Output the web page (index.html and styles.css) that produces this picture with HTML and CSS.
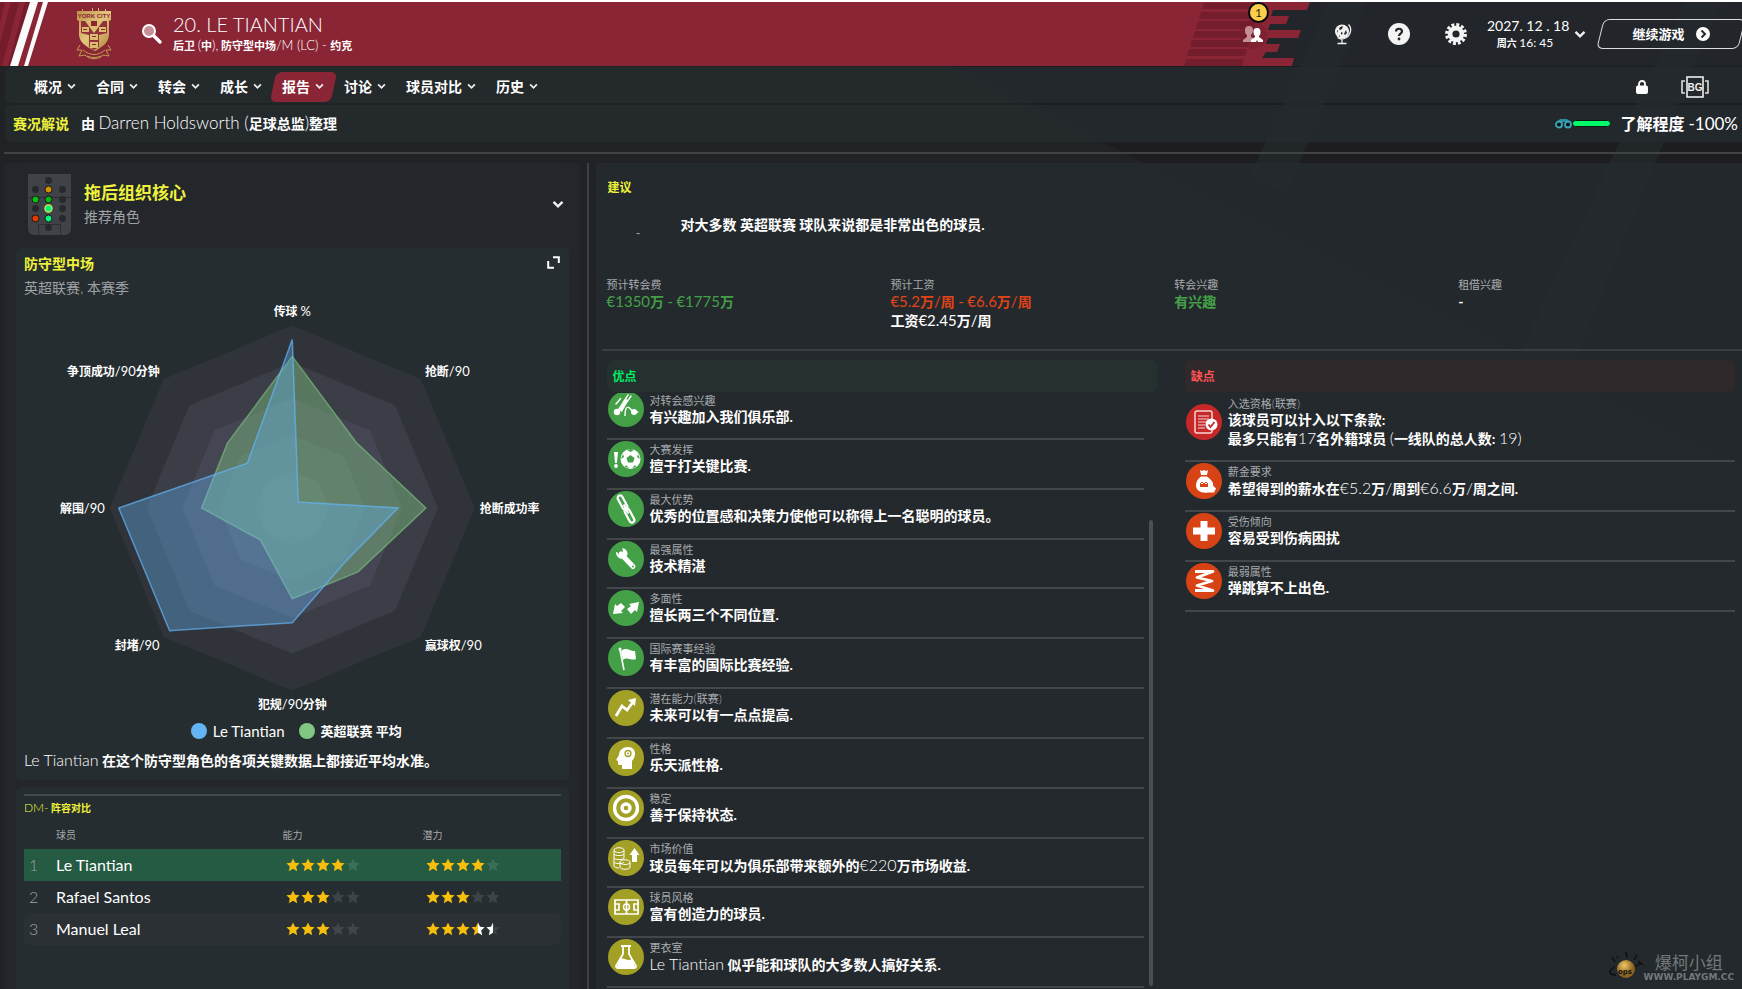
FILE: index.html
```html
<!DOCTYPE html>
<html lang="zh-CN">
<head>
<meta charset="utf-8">
<title>20. LE TIANTIAN</title>
<link rel="stylesheet" href="styles.css">
</head>
<body>
<svg class="backdrop" viewBox="0 0 1742 989" preserveAspectRatio="xMaxYMin slice" aria-hidden="true">
  <path class="shade" d="M950 62 1742 466V0H950Z"/>
  <path class="ray" d="M1329 0h38l-80 190-36-18ZM1685 0h36l-140 342-16 36-46-24Z"/>
</svg>

<svg width="0" height="0" class="defs" aria-hidden="true">
  <defs>
    <linearGradient id="gold-white"><stop offset=".5" stop-color="#f7be0e"/><stop offset=".5" stop-color="#fff"/></linearGradient>
    <linearGradient id="white-grey"><stop offset=".5" stop-color="#fff"/><stop offset=".5" stop-color="#3d4245"/></linearGradient>
    <linearGradient id="crest-gold" x1="0" y1="0" x2="1" y2="1"><stop offset="0" stop-color="#b98f45"/><stop offset=".5" stop-color="#e3c67c"/><stop offset="1" stop-color="#b08338"/></linearGradient>
    <radialGradient id="ball" cx=".4" cy=".3"><stop offset="0" stop-color="#f0c868"/><stop offset="1" stop-color="#8a6420"/></radialGradient>
    <path id="star" d="M7 0.400 9 4.800 13.600 5.300 10.200 8.500 11.200 13.200 7 10.800 2.800 13.200 3.800 8.500 0.400 5.300 5 4.800Z"/>
    <symbol id="chev" viewBox="0 0 8 6"><path d="M1 1.200 4 4.200 7 1.200" fill="none" stroke="#eee" stroke-width="1.600"/></symbol>
  </defs>
</svg>

<header class="top">
  <svg class="stripes-left" width="50" height="64" viewBox="0 0 50 64" aria-hidden="true">
    <path fill="#741c2c" d="M0 0h5L0 22ZM11 0h8L2 64H0V40ZM25 0h5L13 64H8Z"/>
    <path fill="#fafafa" d="M30 0h8L18 64h-8ZM43 0h5L28 64h-4Z"/>
  </svg>
  <svg class="crest" width="36" height="54" viewBox="0 0 36 54" role="img" aria-label="York City">
    <path fill="url(#crest-gold)" d="M1 4h5V2h1v2h9V1h1v3h5V1h1v3h6V2h1v2h5v9l-2 1v13c0 8-5 12-14 17C8 39 3 34 3 27V14l-2-1Z"/>
    <path fill="#8a2534" d="M5 14h4l9 12 9-12h4v12l-8 2v12l-5 3-5-3V28l-8-2Z" opacity=".9"/>
    <path fill="#dcbc70" d="M10 14h5v4h6v-4h5l-8 10ZM6 20h7v5H6ZM23 20h7v5h-7ZM14 27h8v6h-8ZM14 35h8v6h-8Z"/>
    <path fill="#8a2534" d="M15 14h6v5h-6ZM7 22h4v1H7ZM25 22h4v1h-4ZM16 29h4v1h-4ZM16 37h4v1h-4Z"/>
    <path fill="none" stroke="#c09a50" d="M4 38 1 43h5l-3 6 6-1c5 5 13 5 18 0l6 1-3-6h5l-3-5M7 43c7 6 15 6 22 0M11 49c5 2 9 2 14 0"/>
    <text x="18" y="11" class="crest-text">YORK CITY</text>
  </svg>
  <svg class="search" width="22" height="22" viewBox="0 0 22 22" aria-hidden="true">
    <circle cx="8" cy="8" r="6" fill="#c98f98" stroke="#fff" stroke-width="2"/>
    <path d="M13 13 19 19" stroke="#fff" stroke-width="3.400" stroke-linecap="round"/>
  </svg>
  <div class="title">
    <h1>20. LE TIANTIAN</h1>
    <p>后卫 <span class="l">(</span>中<span class="l">),</span> 防守型中场<span class="l">/M (LC) - </span>约克</p>
  </div>
  <svg class="stripes-right" width="134" height="64" viewBox="0 0 134 64" aria-hidden="true">
    <path fill="#8a2535" d="M0 0h134l-3 8H97l-2 6h18l-3 8H94l-2 6h33l-3 8H92l-2 6h14l-3 8H90l-4 6h32l-2 8H0Z"/>
    <path fill="#741e2d" d="M28 1h58l-2 6H26ZM25 10h58l-2 7H23ZM22 19h58l-2 8H20ZM19 29h58l-2 7H17ZM16 38h58l-2 7H14ZM13 47h58l-2 7H11ZM10 57h58l-2 7H8Z"/>
  </svg>
  <div class="tools">
    <button class="icon social" aria-label="社交">
      <svg width="28" height="28" viewBox="0 0 28 28"><circle cx="14" cy="14" r="14" fill="#741e2d" opacity=".5"/>
      <path fill="#c48e97" d="M10 5c3 0 4 2 4 4s-1 4-2 5v2l4 2v3H4v-2l4-3v-2C6 13 6 11 6 9s1-4 4-4Z"/>
      <path fill="#fff" d="M18 7c3 0 3.500 2 3.500 4s-.5 3-1.500 4v1l4 3v2h-5l-1-2-1 2h-5v-2l4-3v-1c-1-1-1.500-2-1.500-4s.5-4 3.500-4Z"/></svg>
      <span class="badge">1</span>
    </button>
    <button class="icon" aria-label="世界">
      <svg width="20" height="22" viewBox="0 0 20 22"><circle cx="9" cy="8.500" r="7" fill="#f2f2f2"/><path fill="#24272c" d="m7 4 3-1-1 3-2 1-1-1ZM13 7l1 3-2 2-1-1ZM8 9l2 1-2 2ZM4 7l1 1-1 2ZM6 12l1 1-1 1Z"/><path d="M15.500 1.500c4 4 2 11-3 13.500-3 1.500-6 1-8-.5M9 16v4M4.500 20.500h9" fill="none" stroke="#f2f2f2" stroke-width="1.300"/></svg>
    </button>
    <button class="icon" aria-label="帮助">
      <svg width="22" height="22" viewBox="0 0 22 22"><circle cx="11" cy="11" r="11" fill="#f4f4f4"/><path d="M8 8.500C8 4.800 14 4.800 14 8.500c0 2-3 2.200-3 4.500" fill="none" stroke="#24272c" stroke-width="2.200"/><circle cx="11" cy="16" r="1.400" fill="#24272c"/></svg>
    </button>
    <button class="icon" aria-label="设置">
      <svg width="24" height="24" viewBox="0 0 24 24"><circle cx="12" cy="12" r="9.200" fill="none" stroke="#f4f4f4" stroke-width="3.500" stroke-dasharray="2.900 1.917"/><circle cx="12" cy="12" r="5.900" fill="none" stroke="#f4f4f4" stroke-width="4.600"/></svg>
    </button>
    <div class="date"><b>2027. 12 . 18</b><small>周六 <span class="l">16: 45</span></small></div>
    <button class="icon down" aria-label="日期菜单"><svg width="12" height="9"><use href="#chev"/></svg></button>
    <button class="continue">继续游戏
      <svg width="14" height="14" viewBox="0 0 14 14" aria-hidden="true"><circle cx="7" cy="7" r="7" fill="#fff"/><path d="M5.500 3.500 9 7 5.500 10.500" fill="none" stroke="#24272c" stroke-width="2"/></svg>
    </button>
  </div>
</header>

<nav class="menu">
  <button>概况<svg><use href="#chev"/></svg></button>
  <button>合同<svg><use href="#chev"/></svg></button>
  <button>转会<svg><use href="#chev"/></svg></button>
  <button>成长<svg><use href="#chev"/></svg></button>
  <button class="on">报告<svg><use href="#chev"/></svg></button>
  <button>讨论<svg><use href="#chev"/></svg></button>
  <button>球员对比<svg><use href="#chev"/></svg></button>
  <button>历史<svg><use href="#chev"/></svg></button>
  <div class="menu-end">
    <svg width="12" height="14" viewBox="0 0 12 14" role="img" aria-label="锁定"><rect y="5.500" width="12" height="8.500" rx="2" fill="#fff"/><path d="M3 7V4a3 3 0 0 1 6 0v3" fill="none" stroke="#fff" stroke-width="1.800"/></svg>
    <svg width="30" height="24" viewBox="0 0 30 24" role="img" aria-label="BG"><path d="M5 6H2v12h3M25 6h3v12h-3" fill="none" stroke="#ddd" stroke-width="1.600"/><rect x="7" y="2" width="16" height="20" fill="none" stroke="#eee" stroke-width="1.600"/><text x="15" y="16" class="bg-text">BG</text></svg>
  </div>
</nav>

<section class="byline">
  <h2>赛况解说</h2>
  <p>由 <span class="l">Darren Holdsworth (</span>足球总监<span class="l">)</span>整理</p>
  <div class="knowledge">
    <svg width="17" height="11" viewBox="0 0 17 11" aria-hidden="true"><path d="M2 4 5 1h7l3 3Z" fill="#2b8c9c"/><circle cx="4" cy="6.500" r="3" fill="#111" stroke="#37a8ba" stroke-width="1.800"/><circle cx="13" cy="6.500" r="3" fill="#111" stroke="#37a8ba" stroke-width="1.800"/></svg>
    <i class="meter"></i>
    <p>了解程度 <span class="l">-100%</span></p>
  </div>
</section>

<main>
  <aside class="left">
    <section class="card role">
      <svg width="43" height="61" viewBox="0 0 43 61" role="img" aria-label="位置">
        <path fill="#3f4246" d="M0 0h43v55a6 6 0 0 1-6 6H6a6 6 0 0 1-6-6Z"/>
        <path d="M0 23.500h43M10.500 61V50.500h22V61" fill="none" stroke="#2b2e32"/>
        <g fill="#26282c"><circle cx="20.500" cy="6.500" r="3.400"/><circle cx="7.500" cy="15.500" r="3.400"/><circle cx="34.500" cy="15.500" r="3.400"/><circle cx="34.500" cy="25.500" r="3.400"/><circle cx="7.500" cy="34.500" r="3.400"/><circle cx="34.500" cy="34.500" r="3.400"/><circle cx="34.500" cy="44.500" r="3.400"/><circle cx="20.500" cy="53.500" r="3.400"/></g>
        <g stroke="#17191b"><circle cx="20.500" cy="15.500" r="3.500" fill="#d59100"/><circle cx="7.500" cy="25.500" r="3.500" fill="#05c014"/><circle cx="20.500" cy="25.500" r="3.500" fill="#05b414"/><circle cx="7.500" cy="44.500" r="3.500" fill="#e03a00"/><circle cx="20.500" cy="44.500" r="3.500" fill="#00f779"/></g>
        <circle cx="20.500" cy="34.500" r="3.600" fill="#00f779" stroke="#e6e85a" stroke-width="1.200"/>
      </svg>
      <div><h3>拖后组织核心</h3><p>推荐角色</p></div>
      <button class="icon" aria-label="展开角色"><svg width="12" height="9"><use href="#chev"/></svg></button>
    </section>

    <section class="card radar">
      <div class="radar-head">
        <div><h3>防守型中场</h3><p>英超联赛<span class="l">,</span> 本赛季</p></div>
        <button class="icon" aria-label="放大"><svg width="13" height="13" viewBox="0 0 13 13"><path d="M6 1.200h5.800V7M1.200 5v6.800H7" fill="none" stroke="#fff" stroke-width="2"/></svg></button>
      </div>
      <svg class="chart" viewBox="16 299 554 417" role="img" aria-label="雷达图">
        <path fill="#30343a" d="M293 325 422 379 476 508 422 637 293 691 164 637 110 508 164 379Z"/>
        <path fill="#3b3e46" d="M293 362 396 405 439 508 396 611 293 654 190 611 147 508 190 405Z"/>
        <path fill="#454653" d="M293 398 371 430 403 508 371 586 293 618 215 586 183 508 215 430Z"/>
        <path fill="#4d505b" d="M293 435 345 456 366 508 345 560 293 581 241 560 220 508 241 456Z"/>
        <path fill="#545862" d="M293 471 319 482 330 508 319 534 293 545 267 534 256 508 267 482Z"/>
        <path fill="#81c784" fill-opacity=".42" stroke="#81c784" stroke-opacity=".6" stroke-width="1.500" d="M293 356 357 442 427 508 359 572 293 599 261 540 202 508 228 443Z"/>
        <path fill="#64b5f6" fill-opacity=".36" stroke="#64b5f6" stroke-opacity=".7" stroke-width="1.500" d="M293 339 299 502 399 508 347 561 293 623 170 631 119 508 248 463Z"/>
        <g class="axis">
          <g class="mid"><text x="293" y="315">传球 <tspan class="l">%</tspan></text><text x="293" y="710">犯规<tspan class="l">/90</tspan>分钟</text></g>
          <text x="426" y="376">抢断<tspan class="l">/90</tspan></text><text x="481" y="513">抢断成功率</text><text x="426" y="650">赢球权<tspan class="l">/90</tspan></text>
          <g class="end"><text x="160" y="650">封堵<tspan class="l">/90</tspan></text><text x="105" y="513">解围<tspan class="l">/90</tspan></text><text x="160" y="376">争顶成功<tspan class="l">/90</tspan>分钟</text></g>
        </g>
      </svg>
      <div class="legend"><span class="key blue"></span><span class="l">Le Tiantian</span><span class="key green"></span><span>英超联赛 平均</span></div>
      <p class="summary"><span class="l">Le Tiantian</span> 在这个防守型角色的各项关键数据上都接近平均水准。</p>
    </section>

    <section class="card squad">
      <h4><span class="l">DM-</span> 阵容对比</h4>
      <table>
        <thead><tr><th class="n"></th><th>球员</th><th class="s">能力</th><th class="s">潜力</th></tr></thead>
        <tbody>
          <tr class="sel"><td class="n">1</td><td>Le Tiantian</td>
            <td><svg class="stars"><g class="g"><use href="#star" x="0"/><use href="#star" x="15"/><use href="#star" x="30"/><use href="#star" x="45"/></g><use class="e" href="#star" x="60"/></svg></td>
            <td><svg class="stars"><g class="g"><use href="#star" x="0"/><use href="#star" x="15"/><use href="#star" x="30"/><use href="#star" x="45"/></g><use class="e" href="#star" x="60"/></svg></td></tr>
          <tr><td class="n">2</td><td>Rafael Santos</td>
            <td><svg class="stars"><g class="g"><use href="#star" x="0"/><use href="#star" x="15"/><use href="#star" x="30"/></g><g class="e"><use href="#star" x="45"/><use href="#star" x="60"/></g></svg></td>
            <td><svg class="stars"><g class="g"><use href="#star" x="0"/><use href="#star" x="15"/><use href="#star" x="30"/></g><g class="e"><use href="#star" x="45"/><use href="#star" x="60"/></g></svg></td></tr>
          <tr class="alt"><td class="n">3</td><td>Manuel Leal</td>
            <td><svg class="stars"><g class="g"><use href="#star" x="0"/><use href="#star" x="15"/><use href="#star" x="30"/></g><g class="e"><use href="#star" x="45"/><use href="#star" x="60"/></g></svg></td>
            <td><svg class="stars"><g class="g"><use href="#star" x="0"/><use href="#star" x="15"/><use href="#star" x="30"/></g><use href="#star" x="45" fill="url(#gold-white)"/><use href="#star" x="60" fill="url(#white-grey)"/></svg></td></tr>
        </tbody>
      </table>
    </section>
  </aside>

  <section class="right">
    <div class="advice">
      <h3>建议</h3>
      <div class="verdict"><span class="grade">-</span><p>对大多数 英超联赛 球队来说都是非常出色的球员.</p></div>
    </div>
    <dl class="facts">
      <div><dt>预计转会费</dt><dd class="good"><span class="l">€1350</span>万 <span class="l">-</span> <span class="l">€1775</span>万</dd></div>
      <div><dt>预计工资</dt><dd class="bad"><span class="l">€5.2</span>万<span class="l">/</span>周 <span class="l">-</span> <span class="l">€6.6</span>万<span class="l">/</span>周</dd><dd>工资<span class="l">€2.45</span>万<span class="l">/</span>周</dd></div>
      <div><dt>转会兴趣</dt><dd class="good">有兴趣</dd></div>
      <div><dt>租借兴趣</dt><dd>-</dd></div>
    </dl>
    <div class="columns">
      <section class="col pros">
        <h3>优点</h3>
        <div class="scroller">
          <ul class="list">
            <li><svg class="ic green" viewBox="0 0 36 36"><path d="M11 18 20 4M15 17l8-12M8 13l5-6" fill="none" stroke="#fff" stroke-width="1.500" stroke-linecap="round" stroke-dasharray="3 1"/><circle cx="9" cy="21" r="3.200" fill="#fff"/><path d="m11 19 7-11 2 1-6 12Z" fill="#fff"/><path d="M17 25c0-10 3-11 7-5" fill="none" stroke="#fff" stroke-width="1.400"/><circle cx="26" cy="21" r="3" fill="#fff"/><path d="m27 19 4 2-4 2Z" fill="#fff"/></svg><div><h4>对转会感兴趣</h4><p>有兴趣加入我们俱乐部.</p></div></li>
            <li><svg class="ic green" viewBox="0 0 36 36"><path d="M6 11h4l-1 11H7Z" fill="#fff"/><circle cx="8" cy="25" r="1.900" fill="#fff"/><circle cx="22.500" cy="18" r="10" fill="#fff"/><path d="m22.500 14 4 3-1.500 4.500h-5L18.500 17ZM19 9l3.500 2L26 9l-3.500-1ZM13 18l2-5 1 3ZM32 18l-2-5-1 3ZM17 26l1-2 3 3ZM28 26l-1-2-3 3Z" fill="#43a047"/></svg><div><h4>大赛发挥</h4><p>擅于打关键比赛.</p></div></li>
            <li><svg class="ic green" viewBox="0 0 36 36"><g fill="none" stroke="#fff" stroke-width="2.200" transform="rotate(-28 18 18)"><rect x="15.500" y="3" width="5" height="15" rx="2.500"/><rect x="15.500" y="18" width="5" height="15" rx="2.500"/><path d="M18 13v10"/></g></svg><div><h4>最大优势</h4><p>优秀的位置感和决策力使他可以称得上一名聪明的球员。</p></div></li>
            <li><svg class="ic green" viewBox="0 0 36 36"><path d="M13 13 25 25.500" stroke="#fff" stroke-width="5" stroke-linecap="round"/><path d="M8 11c0 5 4 8 8 6 4-1 5-6 1-9l-3-1 1 3-1 3-3 1-2-3Z" fill="#fff"/><circle cx="25" cy="25.500" r="1" fill="#43a047"/></svg><div><h4>最强属性</h4><p>技术精湛</p></div></li>
            <li><svg class="ic green" viewBox="0 0 36 36"><path d="M5 24 7 14l2 2 4-3 4 4-4 4 2 2ZM31 12l-2 10-2-2-4 4-4-5 4-3-2-2Z" fill="#fff"/></svg><div><h4>多面性</h4><p>擅长两三个不同位置.</p></div></li>
            <li><svg class="ic green" viewBox="0 0 36 36"><path d="m12 10 4 20" stroke="#fff" stroke-width="1.600"/><circle cx="12" cy="9" r="1.500" fill="#fff"/><path d="M13 11c5-5 10 1 14 0l1 8c-5 2-9-3-13 1Z" fill="#fff"/></svg><div><h4>国际赛事经验</h4><p>有丰富的国际比赛经验.</p></div></li>
            <li><svg class="ic olive" viewBox="0 0 36 36"><path d="m8 26 6-10 5 4 6-8" fill="none" stroke="#fff" stroke-width="2.800"/><path d="m20 10 8-2-1 8Z" fill="#fff"/></svg><div><h4>潜在能力<span class="l">(</span>联赛<span class="l">)</span></h4><p>未来可以有一点点提高.</p></div></li>
            <li><svg class="ic olive" viewBox="0 0 36 36"><path d="M14 29v-4h-3c-1 0-1-2-1-4l-2-1 3-5c0-5 4-8 9-8 8 0 9 9 4 14v8Z" fill="#fff"/><circle cx="20" cy="13.500" r="3" fill="none" stroke="#a3a026" stroke-width="1.300"/><circle cx="20" cy="13.500" r="1" fill="#a3a026"/></svg><div><h4>性格</h4><p>乐天派性格.</p></div></li>
            <li><svg class="ic olive" viewBox="0 0 36 36"><circle cx="18" cy="18" r="11.500" fill="none" stroke="#fff" stroke-width="3.400"/><circle cx="18" cy="18" r="4" fill="none" stroke="#fff" stroke-width="3.400"/></svg><div><h4>稳定</h4><p>善于保持状态.</p></div></li>
            <li><svg class="ic olive" viewBox="0 0 36 36"><path d="M6 10c0-3 10-3 10 0v4c0 2-10 2-10 0ZM6 14v4c0 2 10 2 10 0v-4M6 18v4c0 2 10 2 10 0M6 22v4c0 1 3 2 5 2M12 22c0-3 10-3 10 0v5c0 3-10 3-10 0ZM12 23c2 2 8 2 10 0M6 11c2 2 8 2 10 0" fill="none" stroke="#fff"/><path d="m26.500 8 5 7h-2.500v7h-5v-7h-2.500Z" fill="#fff"/></svg><div><h4>市场价值</h4><p>球员每年可以为俱乐部带来额外的<span class="l">€220</span>万市场收益.</p></div></li>
            <li><svg class="ic olive" viewBox="0 0 36 36"><path d="M7 11h23v14H7ZM18.500 11v14M7 15h4v6H7M30 15h-4v6h4" fill="none" stroke="#fff" stroke-width="1.700"/><circle cx="18.500" cy="18" r="3" fill="none" stroke="#fff" stroke-width="1.500"/></svg><div><h4>球员风格</h4><p>富有创造力的球员.</p></div></li>
            <li><svg class="ic olive" viewBox="0 0 36 36"><path d="M13 7h10M15 7v8L8 27c0 1 0 2 2 2h16c2 0 2-1 2-2l-7-12V7" fill="none" stroke="#fff" stroke-width="1.800"/><path d="M12 20c5-2 7 3 12 0l3 8H9Z" fill="#fff"/></svg><div><h4>更衣室</h4><p><span class="l">Le Tiantian</span> 似乎能和球队的大多数人搞好关系.</p></div></li>
          </ul>
          <div class="track"><i class="thumb"></i></div>
        </div>
      </section>
      <section class="col cons">
        <h3>缺点</h3>
        <ul class="list">
          <li class="tall"><svg class="ic red" viewBox="0 0 36 36"><rect x="9" y="7" width="17" height="22" rx="2" fill="none" stroke="#f6d4d4" stroke-width="1.500"/><path d="M12 12h11M12 15h11M12 18h9M12 21h7M12 24h7" stroke="#f6d4d4"/><circle cx="25.500" cy="20.500" r="6" fill="#fff"/><path d="m22.500 20.500 2 2.500 4-5" fill="none" stroke="#c62828" stroke-width="1.800"/></svg><div><h4>入选资格<span class="l">(</span>联赛<span class="l">)</span></h4><p>该球员可以计入以下条款:</p><p>最多只能有<span class="l">17</span>名外籍球员 <span class="l">(</span>一线队的总人数: <span class="l">19)</span></p></div></li>
          <li><svg class="ic orange" viewBox="0 0 36 36"><path d="m14 7 2 1 2-1 2 1 2-1-1 5h-6ZM15 13.500h6c4 3 7 6 6 9l3 3-2 4h-6c-7 1-12-2-12-7 0-4 2-7 5-9Z" fill="#fff"/><path d="M14 19h8v5h-8Z" fill="#d84315"/><path d="m14 19 2 2 2-2 2 2 2-2" stroke="#fff" fill="none"/></svg><div><h4>薪金要求</h4><p>希望得到的薪水在<span class="l">€5.2</span>万<span class="l">/</span>周到<span class="l">€6.6</span>万<span class="l">/</span>周之间.</p></div></li>
          <li><svg class="ic orange" viewBox="0 0 36 36"><path d="M14.500 8h7v6.500H29v7h-7.500V28h-7v-6.500H7v-7h7.500Z" fill="#fff"/></svg><div><h4>受伤倾向</h4><p>容易受到伤病困扰</p></div></li>
          <li><svg class="ic orange" viewBox="0 0 36 36"><path d="M9 8.500h18L11 14.500 26 18 11 22.500 27 27.500H9" fill="none" stroke="#fff" stroke-width="2.800" stroke-linejoin="round"/></svg><div><h4>最弱属性</h4><p>弹跳算不上出色.</p></div></li>
        </ul>
      </section>
    </div>
  </section>
</main>

<div class="mark">
  <svg width="40" height="34" viewBox="0 0 40 34" aria-hidden="true"><path d="m6 6 3 5M11 5l1 2M20 1l1 6M31 4l-3 5M27 17l8-5m-3-2 5 4M9 16c-6 3-8 8 1 8" fill="none" stroke="#111416" stroke-width="1.800"/><circle cx="20" cy="18" r="9" fill="url(#ball)"/><text x="19" y="23" class="ops">ops</text></svg>
  <div><b>爆柯小组</b><span>WWW.PLAYGM.CC</span></div>
</div>
</body>
</html>
```

FILE: styles.css
```css
* { box-sizing: border-box; margin: 0; padding: 0; }
body {
  height: 100vh; overflow: hidden; display: flex; flex-direction: column;
  background: #212226; color: #fff; position: relative;
  font: 700 14px/18px Lato, "Noto Sans CJK SC", sans-serif;
  border-top: 2px solid #fff;
}
h1, h2, h3, h4 { font-weight: 700; font-size: 14px; }
button { background: none; border: 0; color: inherit; font: inherit; cursor: pointer; }
ul { list-style: none; }
svg { flex: none; display: block; }
.l { font-weight: 300; font-size: 16px; }
.defs { position: absolute; }
.backdrop { position: absolute; inset: 0; width: 100%; height: 100%; z-index: -1; }
.shade { fill: #1d1c21; }
.ray { fill: #212629; }

.top {
  display: flex; align-items: center; height: 64px;
  background: linear-gradient(#8a2535, #8a2535) 0 0 / calc(100% - 566px) 100% no-repeat, rgba(36, 41, 46, .8);
}
.stripes-left { width: 76px; padding-right: 26px; }
.crest { width: 65px; height: 64px; padding: 5px 29px 5px 0; }
.crest-text { font: 700 6px "Liberation Sans", sans-serif; fill: #8a2534; text-anchor: middle; }
.search { margin-right: 10px; }
.title { flex: 1; padding-bottom: 4px; }
h1 { font-weight: 300; font-size: 20px; line-height: 26px; }
.title p { font-size: 11px; line-height: 16px; }
.title .l { font-size: 13px; }
.tools { display: flex; align-items: center; height: 64px; flex: none; }
.icon { display: grid; place-items: center; flex: none; }
.social { position: relative; margin-left: -71px; margin-right: 66px; padding-top: 2px; }
.badge { position: absolute; top: -17px; left: 9px; width: 21px; height: 21px; border: 2px solid #08090a; border-radius: 50%; background: #fbcf4a; color: #302a14; font: 400 12px/17px Lato, sans-serif; }
.social + .icon { margin-right: 35px; }
.social + .icon + .icon { margin-right: 34px; }
.date { text-align: center; width: 76px; margin-left: 19px; }
.date b { display: block; font-weight: 400; font-size: 14px; line-height: 18px; white-space: nowrap; }
.date small { display: block; font-size: 10px; line-height: 16px; }
.date .l { font-size: 12px; font-weight: 400; }
.down { margin: 0 14px 0 11px; }
.continue { position: relative; width: 142px; height: 30px; font-size: 13px; display: flex; align-items: center; justify-content: center; gap: 11px; }
.continue::before { content: ""; position: absolute; inset: 0; border: 1px solid #ddd; border-radius: 6px; transform: skewX(-14deg); }

.menu, .byline { margin-left: 5px; background: rgba(36, 42, 46, .85); border-radius: 6px 0 0 6px; display: flex; align-items: center; }
.menu { margin-top: 1px; height: 36px; padding: 3px 0 0 19px; }
.menu button { display: flex; align-items: center; gap: 5px; height: 30px; padding: 0 10px; position: relative; z-index: 0; }
.menu button svg { width: 9px; height: 7px; }
.menu .on::before { content: ""; position: absolute; inset: 0 0 0 1px; z-index: -1; background: #8a2535; border-radius: 6px; transform: skewX(-12deg); }
.menu-end { margin-left: auto; display: flex; align-items: center; gap: 32px; padding-right: 32px; }
.bg-text { font: 700 10px "Liberation Sans", sans-serif; fill: #eee; text-anchor: middle; }
.byline { margin-top: 2px; height: 37px; padding: 0 4px 0 8px; gap: 12px; }
.byline h2, .card h3, .card h4, .advice h3 { color: #eef23c; }
.byline > p .l { font-size: 17px; }
.knowledge { margin-left: auto; display: flex; align-items: center; font-size: 16px; }
.knowledge .l { font-size: 17px; font-weight: 400; }
.meter { width: 39px; height: 7px; border: 1px solid #0b1a10; border-radius: 4px; background: #00fa6a; margin-right: 10px; }

main { flex: 1; min-height: 0; margin: 10px 0 0 4px; padding-top: 9px; border-top: 2px solid #414246; display: flex; }
.left { width: calc(33% + 2px); padding: 4px 10px 0 11px; background: rgba(35, 40, 44, .9); border-radius: 6px 6px 0 0; margin-right: 7px; display: flex; flex-direction: column; }
.card { background: #262d30; border: 1px solid #23272a; border-radius: 6px; padding: 0 8px; flex: none; }
.role { background: #23262b; display: flex; align-items: center; gap: 13px; height: 73px; padding: 1px 5px 0 12px; margin-bottom: 7px; }
.role div { flex: 1; }
.role h3 { font-size: 17px; line-height: 24px; }
.role p, .radar-head p { color: #a0a3a6; font-weight: 400; line-height: 23px; }
.radar { margin-bottom: 5px; padding-bottom: 5px; }
.radar-head { display: flex; justify-content: space-between; padding: 4px 1px 0 0; }
.radar-head h3 { line-height: 23px; }
.radar-head .icon { height: 20px; }
.chart { width: calc(100% + 16px); height: 417px; margin: 0 -8px; }
.axis { fill: #fff; font-size: 12px; }
.axis .l { font-size: 13px; font-weight: 400; }
.mid { text-anchor: middle; }
.end { text-anchor: end; }
.legend { display: flex; align-items: center; justify-content: center; gap: 6px; padding-left: 8px; font-size: 13px; line-height: 30px; }
.legend .l { font-size: 15px; font-weight: 400; }
.key { width: 16px; height: 16px; border-radius: 50%; }
.blue { background: #64b5f6; }
.legend .green { background: #81c784; margin-left: 8px; }
.summary { line-height: 28px; }
.squad { flex: 1; border-bottom: 0; border-radius: 6px 6px 0 0; padding-top: 7px; }
.card h4 { border-top: 2px solid #45494c; font-size: 10px; line-height: 24px; }
.card h4 .l { font-size: 12px; }
table { width: 100%; border-collapse: separate; border-spacing: 0; table-layout: fixed; }
th { text-align: left; font-size: 10px; font-weight: 400; color: #a5a8aa; height: 29px; }
td { height: 32px; font-weight: 400; font-size: 16px; }
.n { width: 32px; }
td.n { padding-left: 5px; color: #9ba1a3; font-weight: 300; }
th.s { width: 140px; }
th.s:last-child { width: 138px; }
.sel td { background: #245b42; }
.alt td { background: #2a3033; }
.alt td:first-child { border-radius: 6px 0 0 6px; }
.alt td:last-child { border-radius: 0 6px 6px 0; }
.stars { width: 74px; height: 14px; margin-left: 3px; }
.g { fill: #f7be0e; }
.e { fill: #fff; fill-opacity: .11; }

.right { flex: 1; min-width: 0; border-left: 2px solid #3f4044; display: flex; flex-direction: column; padding-left: 7px; background: linear-gradient(rgba(36, 42, 46, .85), rgba(36, 42, 46, .85)) 7px 0 no-repeat; }
.advice { padding: 16px 12px 0; }
.advice h3 { font-size: 12px; }
.verdict { display: flex; align-items: center; height: 55px; }
.grade { width: 73px; padding: 16px 0 0 28px; font-weight: 400; color: #999; }
.facts { display: grid; grid-template-columns: repeat(4, 1fr); height: 99px; margin-left: 6px; padding: 26px 0 0 5px; border-bottom: 2px solid #3a3e41; }
.facts dt { font-size: 11px; font-weight: 400; color: #a8abae; line-height: 14px; }
.facts dd { line-height: 19px; font-weight: 700; }
.facts .l { font-size: 15px; font-weight: 400; }
.good { color: #43a047; }
.bad { color: #e04418; }
.columns { flex: 1; min-height: 0; display: grid; grid-template-columns: 1fr 1fr; gap: 28px; padding: 9px 7px 0 11px; }
.col { min-width: 0; min-height: 0; display: flex; flex-direction: column; }
.col > h3 { height: 32px; padding-left: 6px; border-radius: 6px; font-size: 12px; line-height: 34px; flex: none; }
.pros > h3 { color: #00ee66; background: #24312e; }
.cons > h3 { color: #ff5252; background: rgba(56, 41, 43, .6); }
.scroller { flex: 1; min-height: 0; display: flex; margin-top: 1px; overflow: hidden; padding-right: 4px; }
.scroller .list { flex: 1; margin-bottom: 1px; display: flex; flex-direction: column; }
.scroller li { flex: 1; }
.scroller li:first-child { flex: 0 0 47px; }
.scroller li:first-child .ic { margin-top: -3px; }
.track { width: 9px; padding: 127px 0 3px 5px; }
.thumb { display: block; width: 4px; height: 100%; border-radius: 2px; background: #4b4f52; }
.list li { display: flex; gap: 6px; align-items: flex-start; border-bottom: 2px solid #43474a; padding: 1px; min-height: 0; }
.cons .list { margin-top: 4px; }
.cons li { height: 50px; }
.cons .tall { height: 66px; }
.tall .ic { margin-top: 7px; }
.ic { width: 36px; height: 36px; border-radius: 50%; }
.ic.green { background: #43a047; }
.ic.olive { background: #a3a026; }
.ic.red { background: #c62828; }
.ic.orange { background: #d84315; }
.list h4 { font-size: 11px; font-weight: 400; color: #a8abae; padding-top: 2px; line-height: 14px; }
.scroller li:first-child h4, .tall h4 { padding-top: 0; }
.list h4 .l { font-size: 12px; }
.list p { line-height: 17px; white-space: nowrap; }
.tall p { line-height: 18px; }

.mark { position: absolute; right: 8px; bottom: 4px; display: flex; align-items: center; color: #74787b; }
.mark svg { margin-right: -2px; }
.mark b { display: block; font: 400 17px/18px "Noto Sans CJK SC", serif; text-align: center; }
.mark span { display: block; font: 700 9px/12px "DejaVu Sans", sans-serif; }
.ops { font: 700 7px "DejaVu Sans", sans-serif; fill: #111; text-anchor: middle; }
```
